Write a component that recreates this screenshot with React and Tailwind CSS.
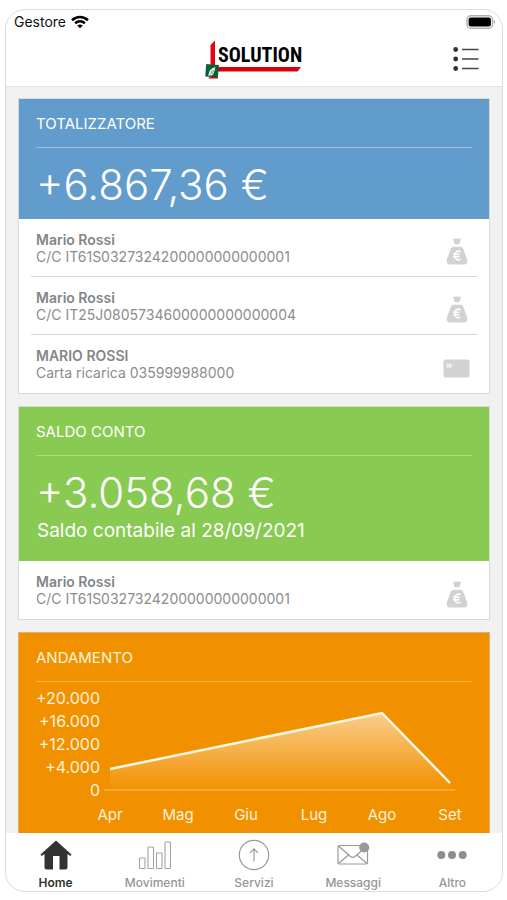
import React from "react";

function WifiIcon() {
  return (
    <svg viewBox="0 0 18 14" className="h-[14px] w-[18px]" aria-hidden="true">
      <g fill="none" stroke="#000" strokeWidth="2.6">
        <path d="M1 5.2C5.600.9 12.400.9 17 5.2" />
        <path d="M4.100 8.300C7 5.700 11 5.700 13.900 8.300" />
      </g>
      <path d="M6.300 10.500C7.900 9.200 10.100 9.200 11.700 10.500L9 13.300Z" fill="#000" />
    </svg>
  );
}

function BatteryIcon() {
  return (
    <svg viewBox="0 0 30 14" className="h-[14px] w-[30px]" aria-hidden="true">
      <rect x="1" y="0.800" width="25.500" height="12.400" rx="3.800" fill="#fff" stroke="#b0b0b0" strokeWidth="1.400" />
      <rect x="2.600" y="2.400" width="22.300" height="9.200" rx="2" fill="#000" />
      <path d="M27.800 4.800C29.500 5.600 29.500 8.400 27.800 9.200Z" fill="#aaa" />
    </svg>
  );
}

function Logo() {
  return (
    <svg viewBox="0 0 99 39" className="h-[39px] w-[99px]" role="img" aria-label="Solution">
      <path d="M5.500 5 10 0.500V26H5.500Z" fill="#e30613" />
      <path d="M10 27H96L92.500 31.500H10Z" fill="#d9000d" />
      <path d="M5 37H13V38.500H3Z" fill="#d9000d" />
      <path d="M1.200 24 14 25 12.800 37.500 0.200 36.400Z" fill="#0b5f38" />
      <path d="M3 35.500C4.500 33 3.500 31 6 29.500 7 28 9 27.500 10.500 27 9.500 29 10.500 30 9.200 31.500 9 33.500 8 35 6.500 35.500Z" fill="#e6f2e9" />
      <path d="M5.500 34.500 7 30.500M7.500 34 8.600 30" stroke="#0b5f38" strokeWidth="0.500" />
      <text x="13" y="22" fontSize="20" className="font-['Liberation_Sans_Narrow','Roboto_Condensed',sans-serif] font-bold" fill="#000">SOLUTION</text>
    </svg>
  );
}

function ListIcon() {
  return (
    <svg viewBox="0 0 26 24" className="h-6 w-[26px]" aria-hidden="true">
      <g fill="#333">
        <circle cx="2.700" cy="2.500" r="2.400" />
        <circle cx="2.700" cy="12" r="2.400" />
        <circle cx="2.700" cy="21.500" r="2.400" />
      </g>
      <path d="M9 2.500H25.500M9 12H25.500M9 21.500H25.500" stroke="#444" strokeWidth="1.700" />
    </svg>
  );
}

function MoneyBagIcon() {
  return (
    <svg viewBox="0 0 22 27" className="h-[27px] w-[22px]" aria-hidden="true">
      <path d="M7 0.600C8.500 1.300 9.500 0.200 11 0.700 12.500 0.200 13.500 1.300 15.200 0.600L13.800 5.200Q13.500 6.300 12.500 6.300H9.500Q8.500 6.300 8.200 5.200Z" fill="#d2d2d2" />
      <path d="M7.500 8.700H14.500C16 8.700 16.800 9.700 17.500 11.500L21 21C22 24 20.800 26.500 18 26.500H4C1.200 26.500 0 24 1 21L4.500 11.500C5.200 9.700 6 8.700 7.500 8.700Z" fill="#d2d2d2" />
      <path d="M14.700 14C11.500 11.700 8.800 14 8.800 17.500S11.500 23.300 14.700 21M7 16.300H13.500M7 18.800H13.500" fill="none" stroke="#fff" strokeWidth="1.500" />
    </svg>
  );
}

function CardIcon() {
  return (
    <svg viewBox="0 0 27 19" className="h-[19px] w-[27px]" aria-hidden="true">
      <rect x="0.500" y="0.500" width="26" height="18" rx="2" fill="#d2d2d2" />
      <path d="M3.500 4.500H8.500V8.500H3.500Z" fill="#f5f5f5" />
      <path d="M5.500 4.500V6.200M7 4.500V6.200M5.500 8.500V7M3.500 6.500H5" stroke="#d2d2d2" strokeWidth="0.500" />
    </svg>
  );
}

function HomeIcon() {
  return (
    <svg viewBox="0 0 32 30" className="h-[30px] w-8" aria-hidden="true">
      <path d="M16 0.500 31.500 14.500 30.500 16 27.500 14V27Q27.500 29.500 25 29.500H19.500V16H13V29.500H7Q4.500 29.500 4.500 27V14L1.500 16 0.500 14.500Z" fill="#333" />
    </svg>
  );
}

function BarsIcon() {
  return (
    <svg viewBox="0 0 34 30" className="h-[30px] w-[34px]" aria-hidden="true">
      <g fill="none" stroke="#a3a3a3" strokeWidth="1.100">
        <rect x="1.500" y="18" width="5.500" height="10.500" rx="0.500" />
        <rect x="10" y="7" width="5.500" height="21.500" rx="0.500" />
        <rect x="18.500" y="13" width="5.500" height="15.500" rx="0.500" />
        <rect x="27" y="2" width="5.500" height="26.500" rx="0.500" />
      </g>
    </svg>
  );
}

function ArrowCircleIcon() {
  return (
    <svg viewBox="0 0 32 32" className="h-8 w-8" aria-hidden="true">
      <g fill="none" stroke="#999" strokeWidth="1.200">
        <circle cx="16" cy="16" r="14.700" />
        <path d="M16 22.500V10M12 13.800 16 9.800 20 13.800" />
      </g>
    </svg>
  );
}

function MailIcon() {
  return (
    <svg viewBox="0 0 34 30" className="h-[30px] w-[34px]" aria-hidden="true">
      <g fill="none" stroke="#999" strokeWidth="1.200" strokeLinejoin="round">
        <rect x="2" y="5.500" width="29.500" height="18.500" rx="1.500" />
        <path d="M2.500 6 14.500 16.500Q16.700 18.300 19 16.500L31 6M2.500 23.500 12.500 15M31 23.500 21 15" />
      </g>
      <circle cx="28.200" cy="7.500" r="5" fill="#999" />
    </svg>
  );
}

function DotsIcon() {
  return (
    <svg viewBox="0 0 30 30" className="h-[30px] w-[30px]" aria-hidden="true">
      <g fill="#8e8e8e">
        <circle cx="4.300" cy="15" r="4" />
        <circle cx="15" cy="15" r="4" />
        <circle cx="25.700" cy="15" r="4" />
      </g>
    </svg>
  );
}

function CardTitle({ children, line }) {
  return (
    <h2 className={`mx-[17px] h-[49px] border-b pt-[15px] text-[15px] leading-5 ${line}`}>{children}</h2>
  );
}

function Account({ name, detail, icon }) {
  return (
    <li className="mx-3 flex h-[58px] items-center justify-between border-b border-[#d8d8d8] pr-[7px] pl-[5px] last:border-b-0">
      <div className="text-[14px] leading-[17px] whitespace-nowrap text-[#8c8c8c]">
        <div className="font-semibold text-[#858585]">{name}</div>
        <div>{detail}</div>
      </div>
      <div className="flex w-[27px] justify-center pt-2">{icon}</div>
    </li>
  );
}

function TrendChart() {
  return (
    <div className="pb-2 text-[#fff3dc]">
      <div className="flex pt-[5px] pr-[34px] pl-4">
        <div className="w-[65px] shrink-0 text-right text-[16px] leading-[23px]">
          <div>+20.000</div>
          <div>+16.000</div>
          <div>+12.000</div>
          <div>+4.000</div>
          <div>0</div>
        </div>
        <svg viewBox="0 0 351 115" preserveAspectRatio="none" className="ml-1 h-[115px] min-w-0 flex-1" role="img" aria-label="Andamento">
          <defs>
            <linearGradient id="trend" x1="0" y1="0" x2="0" y2="1">
              <stop offset="0" stopColor="#fff" stopOpacity="0.550" />
              <stop offset="1" stopColor="#fff" stopOpacity="0" />
            </linearGradient>
          </defs>
          <path d="M6 82 278 26 347 95V103H6Z" fill="url(#trend)" />
          <path d="M0 103H351" stroke="#f8b04d" strokeWidth="1.500" />
          <path d="M6 82 278 26 346 96" fill="none" stroke="#fff7e5" strokeWidth="2.500" vectorEffect="non-scaling-stroke" />
        </svg>
      </div>
      <div className="mt-[3px] mr-[5px] ml-[57px] grid grid-cols-6 text-center text-[15px] leading-5">
        <span>Apr</span>
        <span>Mag</span>
        <span>Giu</span>
        <span>Lug</span>
        <span>Ago</span>
        <span>Set</span>
      </div>
    </div>
  );
}

function Tab({ label, icon, active }) {
  return (
    <a
      href="#"
      aria-current={active ? "page" : undefined}
      className={`flex flex-col items-center text-[12px] leading-4 ${active ? "font-semibold text-[#333]" : "font-medium text-[#969696]"}`}
    >
      <span className="flex h-[34px] items-center">{icon}</span>
      <span className="mt-[3px]">{label}</span>
    </a>
  );
}

export default function App() {
  return (
    <div className="bg-white pt-[9px] pr-1 pb-2 pl-[5px] font-['Inter','Liberation_Sans',sans-serif]">
      <div className="overflow-hidden rounded-[20px] border border-[#dcdcdc] bg-white">
        <header className="border-b border-[#e2e2e2]">
          <div className="flex h-6 items-center justify-between pr-[6px] pl-2">
            <div className="flex items-center gap-[5px] text-[14px] leading-5 text-[#111]">
              <span>Gestore</span>
              <WifiIcon />
            </div>
            <BatteryIcon />
          </div>
          <div className="grid h-[52px] grid-cols-[1fr_auto_1fr] pt-[6px]">
            <div />
            <Logo />
            <button type="button" aria-label="Menu" className="mr-[23px] flex items-start justify-self-end pt-[7px]">
              <ListIcon />
            </button>
          </div>
        </header>

        <main className="flex flex-col gap-3 bg-[#f1f1f1] px-3 pt-[11px]">
          <section className="border border-[#d9d9d9] bg-white">
            <div className="h-[120px] bg-[#629ccc] text-white">
              <CardTitle line="border-[#9dc1df]">TOTALIZZATORE</CardTitle>
              <p className="pt-[13px] pl-[17px] text-[42px] leading-[48px] font-light">+6.867,36 €</p>
            </div>
            <ul>
              <Account name="Mario Rossi" detail="C/C IT61S0327324200000000000001" icon={<MoneyBagIcon />} />
              <Account name="Mario Rossi" detail="C/C IT25J0805734600000000000004" icon={<MoneyBagIcon />} />
              <Account name="MARIO ROSSI" detail="Carta ricarica 035999988000" icon={<CardIcon />} />
            </ul>
          </section>

          <section className="border border-[#d9d9d9] bg-white">
            <div className="h-[154px] bg-[#89ca52] text-white">
              <CardTitle line="border-[#aedb88]">SALDO CONTO</CardTitle>
              <p className="pt-[13px] pl-[17px] text-[42px] leading-[48px] font-light">+3.058,68 €</p>
              <p className="pl-[18px] text-[19px] leading-7">Saldo contabile al 28/09/2021</p>
            </div>
            <ul>
              <Account name="Mario Rossi" detail="C/C IT61S0327324200000000000001" icon={<MoneyBagIcon />} />
            </ul>
          </section>

          <section className="border border-b-0 border-[#e0b070] bg-[#f29100] text-[#fff3dc]">
            <CardTitle line="border-[#f7b14d]">ANDAMENTO</CardTitle>
            <TrendChart />
          </section>
        </main>

        <nav className="grid h-[58px] grid-cols-5 pt-[5px]">
          <Tab label="Home" icon={<HomeIcon />} active />
          <Tab label="Movimenti" icon={<BarsIcon />} />
          <Tab label="Servizi" icon={<ArrowCircleIcon />} />
          <Tab label="Messaggi" icon={<MailIcon />} />
          <Tab label="Altro" icon={<DotsIcon />} />
        </nav>
      </div>
    </div>
  );
}
